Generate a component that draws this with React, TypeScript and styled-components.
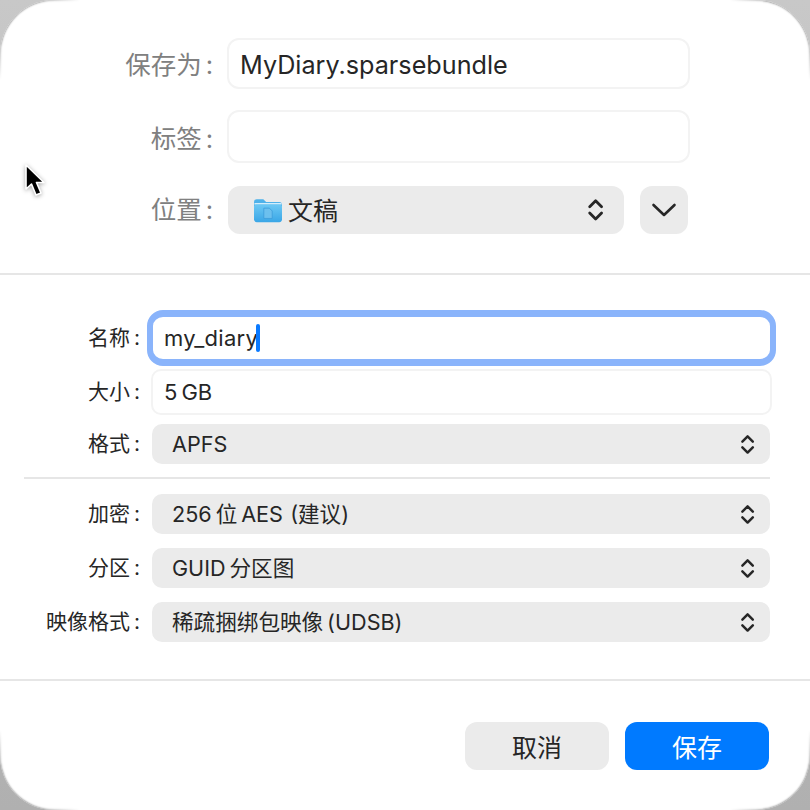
import React from 'react';
import styled, { createGlobalStyle } from 'styled-components';

const GlobalStyle = createGlobalStyle`
    html, body {
        margin: 0;
        padding: 0;
        background: #b8b8b8;
    }

    body {
        font-family: Inter, "Noto Sans CJK SC", sans-serif;
        color: #262626;
    }
`;

const Backdrop = styled.div`
    width: 810px;
    height: 810px;
    background: linear-gradient(180deg, #c8c8c8 0%, #b0b0b0 100%);
    overflow: hidden;
`;

const Dialog = styled.div`
    position: relative;
    width: 810px;
    height: 810px;
    background: #ffffff;
    border-radius: 54px;
    display: flex;
    flex-direction: column;

    /* thin grey edge that fades out after the corners */
    &::after {
        content: '';
        position: absolute;
        inset: 0;
        border-radius: 54px;
        box-shadow: inset 0 0 2px 0.5px rgba(0, 0, 0, 0.45);
        pointer-events: none;
        mask-image:
            radial-gradient(circle at 0 0, #000 40px, transparent 80px),
            radial-gradient(circle at 100% 0, #000 40px, transparent 80px),
            radial-gradient(circle at 0 100%, #000 40px, transparent 80px),
            radial-gradient(circle at 100% 100%, #000 40px, transparent 80px);
    }
`;

const TopSection = styled.section`
    height: 275px;
    box-sizing: border-box;
    padding: 38px 120px 0 0;
    border-bottom: 2px solid #e6e6e6;
`;

const MiddleSection = styled.section`
    height: 406px;
    box-sizing: border-box;
    padding: 35px 40px 0 0;
    border-bottom: 2px solid #e6e6e6;
`;

const Row = styled.div<{ $top?: number }>`
    display: flex;
    align-items: center;
    margin-top: ${(p) => p.$top ?? 0}px;
`;

const MainLabel = styled.label<{ $lift: number }>`
    flex: 0 0 213px;
    margin: 0 14px ${(p) => p.$lift}px 0;
    font-size: 25.5px;
    color: #808080;
    text-align: right;
    white-space: nowrap;
`;

const Label = styled.label`
    flex: 0 0 140px;
    margin: 0 12px 4px 0;
    font-size: 21px;
    color: #262626;
    text-align: right;
    white-space: nowrap;
`;

const Colon = styled.span`
    margin-left: 4px;
`;

const MainField = styled.div<{ $height: number }>`
    flex: 1;
    height: ${(p) => p.$height}px;
    box-sizing: border-box;
    padding: 2px 0 0 11px;
    border: 2px solid #f3f3f3;
    border-radius: 12px;
    display: flex;
    align-items: center;
    font-size: 25.2px;
`;

const LocationRow = styled.div`
    flex: 1;
    display: flex;
    gap: 16px;
    margin: 0 2px 0 1px;
`;

const LocationSelect = styled.div`
    flex: 1;
    height: 48px;
    box-sizing: border-box;
    padding: 0 20px 0 26px;
    background: #ebebeb;
    border-radius: 12px;
    display: flex;
    align-items: center;
    gap: 6px;
    font-size: 25px;
`;

const ExpandButton = styled.div`
    width: 48px;
    height: 48px;
    background: #ebebeb;
    border-radius: 12px;
    display: flex;
    align-items: center;
    justify-content: center;
`;

const NameField = styled.div`
    flex: 1;
    height: 42px;
    margin: 0 -6px 0 -5px;
    padding-left: 11px;
    border-style: solid;
    border-color: #8ab4fb;
    border-width: 7px 6px;
    border-radius: 16px;
    display: flex;
    align-items: center;
    font-size: 22px;
    letter-spacing: 0.3px;
`;

const Caret = styled.span`
    width: 4px;
    height: 28px;
    margin-left: -2px;
    border-radius: 2px;
    background: #0a7aff;
`;

const SizeField = styled.div`
    flex: 1;
    height: 46px;
    box-sizing: border-box;
    margin: 0 -2px 0 -1px;
    padding-left: 11px;
    border: 2px solid #f3f3f3;
    border-radius: 10px;
    display: flex;
    align-items: center;
    font-size: 22px;
`;

const Select = styled.div`
    flex: 1;
    height: 40px;
    box-sizing: border-box;
    padding: 0 15px 0 20px;
    background: #ebebeb;
    border-radius: 10px;
    display: flex;
    align-items: center;
    font-size: 21.6px;
`;

const SelectText = styled.span<{ $lift?: number }>`
    margin-bottom: ${(p) => p.$lift ?? 0}px;
    white-space: nowrap;
`;

const InnerDivider = styled.hr`
    height: 2px;
    margin: 13px 0 15px 24px;
    border: 0;
    background: #e6e6e6;
`;

const Footer = styled.footer`
    flex: 1;
    box-sizing: border-box;
    padding: 41px 41px 0 0;
    display: flex;
    justify-content: flex-end;
    align-items: flex-start;
    gap: 16px;
`;

const Button = styled.button<{ $primary?: boolean }>`
    width: 144px;
    height: 48px;
    padding: 0;
    border: 0;
    border-radius: 12px;
    background: ${(p) => (p.$primary ? '#007aff' : '#ebebeb')};
    color: ${(p) => (p.$primary ? '#ffffff' : '#262626')};
    font-family: inherit;
    font-size: 25px;
`;

const Pointer = styled.svg`
    position: absolute;
    left: 20px;
    top: 160px;
    filter: drop-shadow(0 1px 2px rgba(0, 0, 0, 0.35));
`;

const UpdownIcon = styled.svg`
    flex: none;
    margin-left: auto;
`;

const Updown = ({ size }: { size: number }) => (
    <UpdownIcon width={16 * size} height={22 * size} viewBox="0 0 16 22" fill="none" stroke="#262626" strokeWidth="2.6" strokeLinecap="round" strokeLinejoin="round">
        <path d="M2.500 8 8 2.500 13.500 8" />
        <path d="M2.500 14 8 19.500 13.500 14" />
    </UpdownIcon>
);

const FolderIcon = () => (
    <svg width="28" height="25" viewBox="0 0 30 26">
        <defs>
            <linearGradient id="folderFront" x1="0" y1="0" x2="0" y2="1">
                <stop offset="0" stopColor="#6cc8f4" />
                <stop offset="1" stopColor="#3aa6e6" />
            </linearGradient>
        </defs>
        <path d="M0 4a3 3 0 0 1 3-3h7l3 3h14a3 3 0 0 1 3 3v2H0z" fill="#4fb2ea" />
        <rect x="0.5" y="5" width="29" height="1.6" fill="#d6effc" />
        <rect y="6.5" width="30" height="19" rx="3" fill="url(#folderFront)" />
        <path d="M10.500 10.500h6l3 3v8h-9z" fill="#6cc0ee" stroke="#3a9ad8" strokeWidth="0.8" />
    </svg>
);

const App = () => (
    <>
        <GlobalStyle />
        <Backdrop>
            <Dialog>
                <TopSection>
                    <Row>
                        <MainLabel $lift={2}>保存为<Colon>:</Colon></MainLabel>
                        <MainField $height={51}>MyDiary.sparsebundle</MainField>
                    </Row>
                    <Row $top={21}>
                        <MainLabel $lift={0}>标签<Colon>:</Colon></MainLabel>
                        <MainField $height={53} />
                    </Row>
                    <Row $top={23}>
                        <MainLabel $lift={6}>位置<Colon>:</Colon></MainLabel>
                        <LocationRow>
                            <LocationSelect>
                                <FolderIcon />
                                <SelectText $lift={2}>文稿</SelectText>
                                <Updown size={1.08} />
                            </LocationSelect>
                            <ExpandButton>
                                <svg width="26" height="16" viewBox="0 0 26 16" fill="none" stroke="#262626" strokeWidth="2.6" strokeLinecap="round" strokeLinejoin="round">
                                    <path d="M2.500 3 13 13 23.500 3" />
                                </svg>
                            </ExpandButton>
                        </LocationRow>
                    </Row>
                </TopSection>
                <MiddleSection>
                    <Row>
                        <Label>名称<Colon>:</Colon></Label>
                        <NameField>
                            my_diary
                            <Caret />
                        </NameField>
                    </Row>
                    <Row $top={3}>
                        <Label>大小<Colon>:</Colon></Label>
                        <SizeField>5{'\u2009'}GB</SizeField>
                    </Row>
                    <Row $top={9}>
                        <Label>格式<Colon>:</Colon></Label>
                        <Select>
                            <SelectText>APFS</SelectText>
                            <Updown size={0.95} />
                        </Select>
                    </Row>
                    <InnerDivider />
                    <Row>
                        <Label>加密<Colon>:</Colon></Label>
                        <Select>
                            <SelectText $lift={4}>256{'\u2009'}位{'\u2009'}AES{'\u2004'}(建议)</SelectText>
                            <Updown size={0.95} />
                        </Select>
                    </Row>
                    <Row $top={14}>
                        <Label>分区<Colon>:</Colon></Label>
                        <Select>
                            <SelectText $lift={4}>GUID{'\u2009'}分区图</SelectText>
                            <Updown size={0.95} />
                        </Select>
                    </Row>
                    <Row $top={14}>
                        <Label>映像格式<Colon>:</Colon></Label>
                        <Select>
                            <SelectText $lift={3}>稀疏捆绑包映像{'\u2009'}(UDSB)</SelectText>
                            <Updown size={0.95} />
                        </Select>
                    </Row>
                </MiddleSection>
                <Footer>
                    <Button>取消</Button>
                    <Button $primary>保存</Button>
                </Footer>
                <Pointer width="30" height="42" viewBox="0 0 30 42">
                    <path d="M6 5v24l5.500-5 4.500 11 5-2-4.500-10.500h7.500z" fill="#000" stroke="#fff" strokeWidth="1.6" strokeLinejoin="round" />
                </Pointer>
            </Dialog>
        </Backdrop>
    </>
);

export default App;
